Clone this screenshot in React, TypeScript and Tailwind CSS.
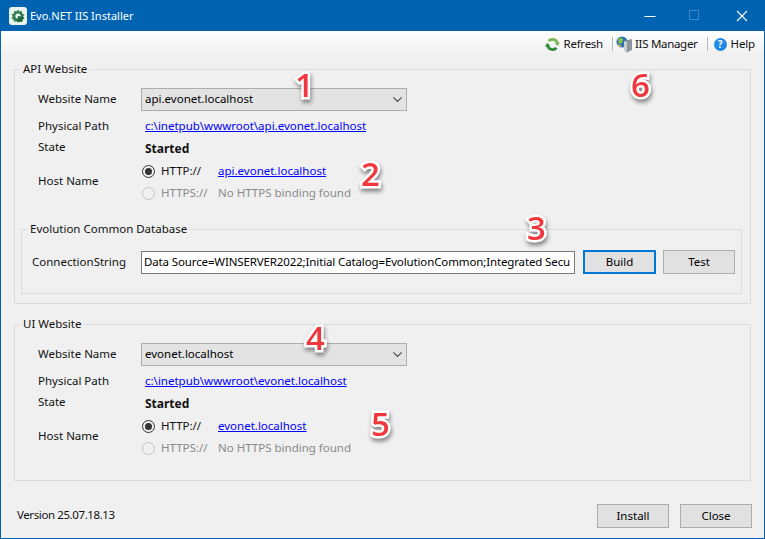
import React from "react";

const Chevron = () => (
  <svg width="9" height="5" viewBox="0 0 9 5" fill="none" stroke="#444" strokeWidth="1.1">
    <path d="M0.4 0.4 L4.5 4.5 L8.6 0.4" />
  </svg>
);

const Select = ({ value }: { value: string }) => (
  <div className="w-[266px] h-[23px] bg-[#e3e3e3] border border-[#adadad] pl-[3px] pr-[4px] flex items-center justify-between text-[#000] leading-none">
    <span className="-translate-y-px">{value}</span>
    <Chevron />
  </div>
);

const Radio = ({ checked, disabled }: { checked?: boolean; disabled?: boolean }) => (
  <span className={`w-[13px] h-[13px] rounded-full border flex items-center justify-center bg-[#f0f0f0] ${disabled ? "border-[#c4c4c4]" : "border-[#333]"}`}>
    {checked && <span className="w-[7px] h-[7px] rounded-full bg-[#333]" />}
  </span>
);

const Link = ({ children }: { children: React.ReactNode }) => (
  <a className="text-[#0000ff] underline">{children}</a>
);

const Btn = ({ children, primary, w }: { children: React.ReactNode; primary?: boolean; w: string }) => (
  <button className={`${w} h-[24px] bg-[#e1e1e1] flex items-center justify-center text-black ${primary ? "border-2 border-[#0078d7]" : "border border-[#adadad]"}`}>
    {children}
  </button>
);

const Site = ({ name, path, host }: { name: string; path: string; host: string }) => (
  <div className="flex flex-col pl-[23px] pt-[11px]">
    <div className="flex items-center h-[23px]">
      <span className="w-[103px] -translate-y-px">Website Name</span>
      <Select value={name} />
    </div>
    <div className="flex items-center h-[20px] mt-[5px]">
      <span className="w-[107px]">Physical Path</span>
      <Link>{path}</Link>
    </div>
    <div className="flex items-center h-[20px] mt-[1px]">
      <span className="w-[107px]">State</span>
      <span className="font-bold text-[12px] translate-y-[2px]">Started</span>
    </div>
    <div className="flex items-center h-[44px] mt-[3px]">
      <span className="w-[104px] -translate-y-px">Host Name</span>
      <div className="flex flex-col gap-[9px]">
        <div className="flex items-center h-[13px]">
          <Radio checked />
          <span className="w-[57px] ml-[6px]">HTTP://</span>
          <Link>{host}</Link>
        </div>
        <div className="flex items-center h-[13px] text-[#8a8a8a]">
          <Radio disabled />
          <span className="w-[57px] ml-[6px]">HTTPS://</span>
          <span>No HTTPS binding found</span>
        </div>
      </div>
    </div>
  </div>
);

const Num = ({ n, cls }: { n: string; cls: string }) => (
  <span className={`absolute font-semibold text-[33px] leading-none text-[#f0383c] [font-family:'Open_Sans',sans-serif] [paint-order:stroke_fill] [-webkit-text-stroke:5px_white] [filter:drop-shadow(1px_3px_2px_rgba(0,0,0,0.45))] ${cls}`}>
    {n}
  </span>
);

export default function App() {
  return (
    <div className="relative w-[765px] h-[539px] overflow-hidden bg-[#f0f0f0] border-x border-b border-[#0063b1] text-[11.5px] leading-[16px] text-[#111] [font-family:'Noto_Sans','Open_Sans',sans-serif] flex flex-col">
      <div className="h-[31px] -mx-px bg-[#0063b1] flex items-center text-white shrink-0">
        <div className="w-[18px] h-[18px] ml-[9px] rounded-[3px] bg-[#e8f3ec] flex items-center justify-center">
          <svg width="14" height="14" viewBox="0 0 14 14">
            <path d="M7 0.5 L8.4 2.6 L10.9 1.9 L11 4.4 L13.4 5.4 L12 7.4 L13.4 9.5 L10.9 10.4 L10.7 13 L8.2 12.3 L6.7 13.6 L5.2 12.2 L2.9 12.8 L2.7 10.4 L0.5 9.4 L1.8 7.3 L0.6 5.2 L3 4.4 L3.2 2 L5.6 2.6 Z" fill="#2f7f52" />
            <circle cx="7" cy="7" r="2.6" fill="#e8f3ec" />
            <path d="M7 7 L13 8 L11 13 L6 13 Z" fill="#1f6a3f" />
          </svg>
        </div>
        <span className="ml-[3px] text-[11px]">Evo.NET IIS Installer</span>
        <div className="ml-auto flex items-center">
          <svg width="12" height="12" viewBox="0 0 12 12" className="mr-[33px]"><path d="M0.5 6.5 H11.5" stroke="#fff" /></svg>
          <svg width="11" height="11" viewBox="0 0 11 11" className="mr-[36px]"><rect x="0.5" y="0.5" width="9" height="9" fill="none" stroke="#3f86c3" /></svg>
          <svg width="12" height="12" viewBox="0 0 12 12" className="mr-[17px]"><path d="M1 1 L11 11 M11 1 L1 11" stroke="#fff" strokeWidth="1.1" /></svg>
        </div>
      </div>

      <div className="h-[24px] shrink-0 -mx-px bg-gradient-to-b from-[#ffffff] to-[#f0f0f0] flex items-center justify-end pr-[10px] pt-[2px]">
        <svg width="15" height="15" viewBox="0 0 15 15" className="mr-[4px]">
          <path d="M7.5 1 A6.5 6.5 0 0 1 13.6 5.4 L15 5 L13 9 L9.6 6.6 L11 6.2 A3.8 3.8 0 0 0 4.8 5 L2.4 3.2 A6.5 6.5 0 0 1 7.5 1 Z" fill="#78b956" />
          <path d="M7.5 14 A6.5 6.5 0 0 1 1.4 9.6 L0 10 L2 6 L5.4 8.4 L4 8.8 A3.8 3.8 0 0 0 10.2 10 L12.6 11.8 A6.5 6.5 0 0 1 7.5 14 Z" fill="#2f8a3a" />
        </svg>
        <span className="tracking-[-0.25px]">Refresh</span>
        <span className="w-px h-[14px] bg-[#b8b8b8] ml-[9px] mr-[3px]" />
        <svg width="17" height="17" viewBox="0 0 17 17" className="mr-[2px]">
          <circle cx="6" cy="6" r="5.5" fill="#2a74b8" />
          <path d="M2 3 Q5 1 7 3 L6 7 L3 8 Z M8 6 L11 5 L10 9 L8 9 Z" fill="#8cc63f" />
          <path d="M1.5 8 L6 10 L3 11 Z" fill="#e9c13c" />
          <path d="M8 5 L16 3 V14 L11 16.5 L8 14 Z" fill="#8e9499" />
          <path d="M11 6 V16 L8 14 V5 Z" fill="#c9ced1" />
        </svg>
        <span className="tracking-[-0.3px]">IIS Manager</span>
        <span className="w-px h-[14px] bg-[#b8b8b8] ml-[9px] mr-[6px]" />
        <span className="w-[13px] h-[13px] rounded-full bg-[#1e88e5] text-white text-[10px] leading-none font-bold flex items-center justify-center mr-[4px]">?</span>
        <span className="tracking-[-0.15px]">Help</span>
      </div>

      <div className="flex flex-col px-[13px]">
        <fieldset className="h-[243px] mt-[6px] border border-[#dcdcdc]">
          <legend className="ml-[5px] px-[3px] h-[16px]">API Website</legend>
          <Site name="api.evonet.localhost" path="c:\inetpub\wwwroot\api.evonet.localhost" host="api.evonet.localhost" />
          <fieldset className="ml-[6px] mr-[8px] mt-[17px] h-[73px] border border-[#dcdcdc]">
            <legend className="ml-[6px] px-[2px] h-[16px]">Evolution Common Database</legend>
            <div className="flex items-center h-[24px] ml-[10px] mt-[13px]">
              <span className="w-[109px]">ConnectionString</span>
              <div className="w-[434px] h-[23px] border border-[#7a7a7a] bg-white pl-[2px] overflow-hidden whitespace-nowrap flex items-center text-black tracking-[-0.13px]">
                Data Source=WINSERVER2022;Initial Catalog=EvolutionCommon;Integrated Secu
              </div>
              <div className="ml-[8px] flex gap-[7px]">
                <Btn primary w="w-[73px]">Build</Btn>
                <Btn w="w-[72px]">Test</Btn>
              </div>
            </div>
          </fieldset>
        </fieldset>

        <fieldset className="h-[165px] mt-[12px] border border-[#dcdcdc]">
          <legend className="ml-[5px] px-[3px] h-[16px]">UI Website</legend>
          <Site name="evonet.localhost" path="c:\inetpub\wwwroot\evonet.localhost" host="evonet.localhost" />
        </fieldset>

        <div className="flex items-center mt-[23px] pl-[3px]">
          <span className="tracking-[-0.4px] -translate-y-px">Version 25.07.18.13</span>
          <div className="ml-auto -mr-px flex gap-[11px]">
            <Btn w="w-[72px]">Install</Btn>
            <Btn w="w-[72px]">Close</Btn>
          </div>
        </div>
      </div>

      <Num n="1" cls="left-[294px] top-[68px]" />
      <Num n="2" cls="left-[360px] top-[157px]" />
      <Num n="3" cls="left-[526px] top-[211px]" />
      <Num n="4" cls="left-[305px] top-[321px]" />
      <Num n="5" cls="left-[370px] top-[407px]" />
      <Num n="6" cls="left-[630px] top-[68px]" />
    </div>
  );
}
